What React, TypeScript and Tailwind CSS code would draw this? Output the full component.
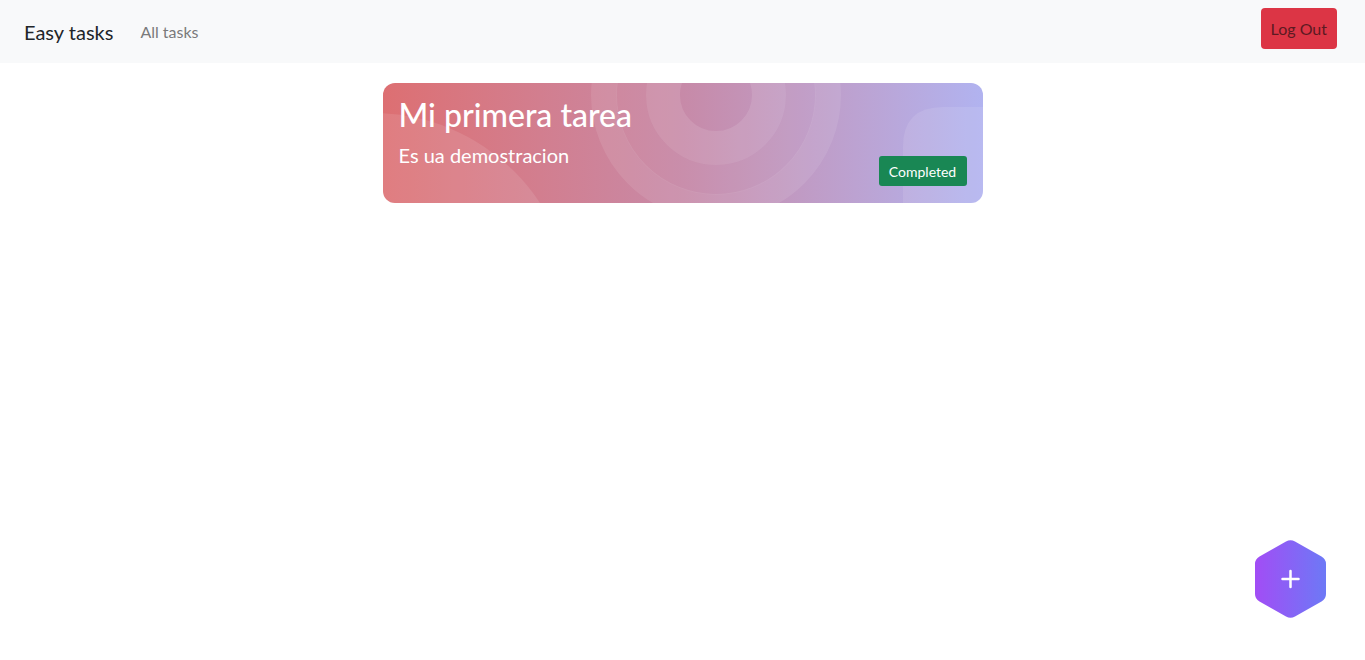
const CardPattern = () => (
  <svg className="absolute inset-0 w-full h-full" viewBox="0 0 600 120" preserveAspectRatio="none">
    {/* big soft circle bottom left */}
    <circle cx="-10" cy="230" r="200" fill="white" fillOpacity="0.1" />
    {/* concentric rings */}
    <circle cx="333" cy="12" r="112" fill="none" stroke="white" strokeOpacity="0.09" strokeWidth="26" />
    <circle cx="333" cy="12" r="85" fill="none" stroke="white" strokeOpacity="0.04" strokeWidth="30" />
    <circle cx="333" cy="12" r="53" fill="none" stroke="white" strokeOpacity="0.11" strokeWidth="34" />
    {/* rounded block right */}
    <path d="M520 120 V64 Q520 24 560 24 H600 V120 Z" fill="white" fillOpacity="0.1" />
  </svg>
);

const App = () => {
  return (
    <div className="min-h-screen bg-white" style={{ fontFamily: "Lato, 'Open Sans', sans-serif" }}>
      <nav className="h-[63px] bg-[#f8f9fa] flex items-center justify-between pl-6 pr-7">
        <div className="flex items-center gap-[27px]">
          <span className="text-[20px] text-[#212529]">Easy tasks</span>
          <span className="text-[16px] text-[#7a7a7a]">All tasks</span>
        </div>
        <button className="self-start mt-2 h-[41px] px-[10px] rounded-[4px] bg-[#dc3545] text-[#5c1a22] text-[16px]">
          Log Out
        </button>
      </nav>

      <main className="flex justify-center pt-5">
        <div className="relative w-[600px] h-[120px] rounded-xl overflow-hidden bg-gradient-to-r from-[#dd6f72] via-[#c78aa8] to-[#b1b3f0]">
          <CardPattern />
          <div className="relative h-full flex justify-between items-end px-4 pt-[13px] pb-[17px]">
            <div className="self-start">
              <h2 className="text-[32px] font-medium text-white leading-[1.2]">Mi primera tarea</h2>
              <p className="text-[20px] text-white leading-normal mt-[6px]">Es ua demostracion</p>
            </div>
            <span className="h-[30px] w-[88px] flex items-center justify-center rounded-[3px] bg-[#198754] text-white text-[14px]">
              Completed
            </span>
          </div>
        </div>
      </main>

      <button className="fixed left-[1255px] top-[539px] w-[71px] h-[80px]">
        <svg viewBox="0 0 71 80" className="w-full h-full">
          <defs>
            <linearGradient id="hexg" x1="0" x2="1" y1="0" y2="0">
              <stop offset="0" stopColor="#a24df5" />
              <stop offset="1" stopColor="#6d79f6" />
            </linearGradient>
          </defs>
          <path
            d="M31 2.5 Q35.5 0 40 2.5 L66.5 17.5 Q71 20 71 25 L71 55 Q71 60 66.5 62.5 L40 77.5 Q35.5 80 31 77.5 L4.5 62.5 Q0 60 0 55 L0 25 Q0 20 4.5 17.5 Z"
            fill="url(#hexg)"
          />
          <path d="M35.5 32 V48 M27.5 40 H43.5" stroke="white" strokeWidth="2.5" strokeLinecap="round" />
        </svg>
      </button>
    </div>
  );
};

export default App;
